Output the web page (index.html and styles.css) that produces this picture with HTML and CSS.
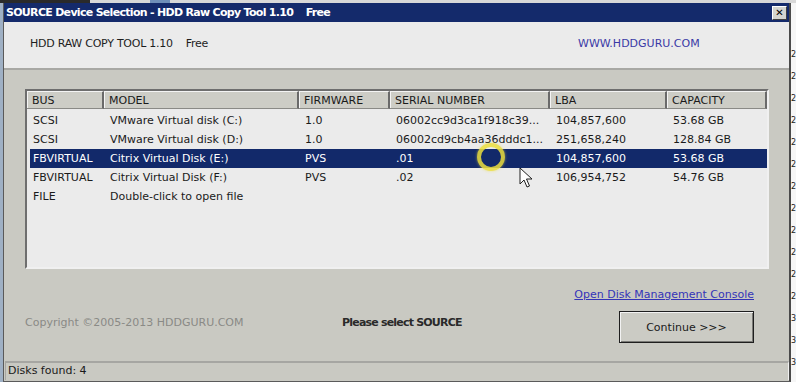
FILE: index.html
```html
<!DOCTYPE html>
<html lang="en">

<head>
    <meta charset="UTF-8">
    <title>SOURCE Device Selection - HDD Raw Copy Tool 1.10</title>
    <link rel="stylesheet" href="styles.css">
</head>

<body>
    <div class="screen">
        <div class="desk-left"></div>

        <div class="window">
            <div class="titlebar">
                <span class="title">SOURCE Device Selection - HDD Raw Copy Tool 1.10&nbsp;&nbsp;&nbsp; Free</span>
                <button class="close">&#x2715;</button>
            </div>

            <div class="banner">
                <span class="product">HDD RAW COPY TOOL 1.10&nbsp;&nbsp;&nbsp; Free</span>
                <span class="site">WWW.HDDGURU.COM</span>
            </div>

            <div class="content">
                <div class="list">
                    <table class="devices">
                        <colgroup>
                            <col class="c-bus">
                            <col class="c-model">
                            <col class="c-fw">
                            <col class="c-serial">
                            <col class="c-lba">
                            <col class="c-cap">
                        </colgroup>
                        <thead>
                            <tr>
                                <th>BUS</th>
                                <th>MODEL</th>
                                <th>FIRMWARE</th>
                                <th>SERIAL NUMBER</th>
                                <th>LBA</th>
                                <th>CAPACITY</th>
                            </tr>
                        </thead>
                        <tbody>
                            <tr>
                                <td>SCSI</td>
                                <td>VMware Virtual disk (C:)</td>
                                <td>1.0</td>
                                <td>06002cc9d3ca1f918c39...</td>
                                <td>104,857,600</td>
                                <td>53.68 GB</td>
                            </tr>
                            <tr>
                                <td>SCSI</td>
                                <td>VMware Virtual disk (D:)</td>
                                <td>1.0</td>
                                <td>06002cd9cb4aa36dddc1...</td>
                                <td>251,658,240</td>
                                <td>128.84 GB</td>
                            </tr>
                            <tr class="selected">
                                <td>FBVIRTUAL</td>
                                <td>Citrix Virtual Disk (E:)</td>
                                <td>PVS</td>
                                <td>.01</td>
                                <td>104,857,600</td>
                                <td>53.68 GB</td>
                            </tr>
                            <tr>
                                <td>FBVIRTUAL</td>
                                <td>Citrix Virtual Disk (F:)</td>
                                <td>PVS</td>
                                <td>.02</td>
                                <td>106,954,752</td>
                                <td>54.76 GB</td>
                            </tr>
                            <tr>
                                <td>FILE</td>
                                <td>Double-click to open file</td>
                                <td></td>
                                <td></td>
                                <td></td>
                                <td></td>
                            </tr>
                        </tbody>
                    </table>
                </div>

                <div class="footer">
                    <div class="copyright">Copyright &copy;2005-2013 HDDGURU.COM</div>
                    <div class="prompt">Please select SOURCE</div>
                    <div class="actions">
                        <a class="console-link" href="#">Open Disk Management Console</a>
                        <button class="continue">Continue &gt;&gt;&gt;</button>
                    </div>
                </div>
            </div>

            <div class="statusbar">
                <div class="status-field">Disks found: 4</div>
            </div>
        </div>

        <div class="desk-right">
            <span>2</span><span>2</span><span>2</span><span>2</span><span>2</span><span>2</span><span>2</span><span>2</span><span>2</span><span>2</span><span>2</span><span>2</span><span>3</span><span>3</span><span>3</span>
        </div>

        <!-- screen-recorder click marker and mouse pointer -->
        <div class="click-ring"></div>
        <svg class="pointer" width="14" height="22" viewBox="0 0 14 22">
            <path d="M1 1 L1 17 L5 13 L8 20 L10.5 19 L7.5 12 L13 12 Z" fill="#ffffff" stroke="#202020" stroke-width="1" stroke-linejoin="round" />
        </svg>
    </div>
</body>

</html>
```

FILE: styles.css
```css
* {
    box-sizing: border-box;
    margin: 0;
    padding: 0;
}

body {
    background: #f2f2f2;
    font-family: "DejaVu Sans", Verdana, sans-serif;
    font-size: 11px;
    color: #1a1a1a;
    overflow: hidden;
}

.screen {
    position: relative;
    width: 796px;
    height: 382px;
    display: flex;
    padding-top: 3px;
    background: linear-gradient(to right, #2a2a2a 0 90px, #d8d8d8 90px 150px, #6f8fb8 150px 170px, #d8d8d8 170px);
    background-size: 100% 3px;
    background-repeat: no-repeat;
    background-color: #f4f4f4;
}

.desk-left {
    width: 3px;
    background: #9fb0c4;
}

.window {
    width: 788px;
    display: flex;
    flex-direction: column;
    border-left: 1px solid #5a5a5a;
    border-right: 2px solid #4a4a4a;
    border-bottom: 1px solid #5a5a5a;
    background: #c9c9c2;
}

.titlebar {
    height: 19px;
    background: #142a6b;
    color: #ffffff;
    display: flex;
    align-items: center;
    justify-content: space-between;
    padding: 0 2px 0 2px;
}

.title {
    font-weight: bold;
    font-size: 11px;
    letter-spacing: -0.7px;
}

.close {
    width: 15px;
    height: 14px;
    background: #d4d4ce;
    border: 1px solid;
    border-color: #ffffff #404040 #404040 #ffffff;
    color: #000000;
    font-size: 10px;
    font-weight: bold;
    line-height: 11px;
    font-family: "DejaVu Sans", sans-serif;
}

.banner {
    height: 48px;
    background: #ebebeb;
    display: flex;
    align-items: center;
    padding: 0 0 4px 26px;
    border-bottom: 2px solid #a8a8a4;
}

.product {
    width: 548px;
    color: #1e1e1e;
    letter-spacing: -0.25px;
}

.site {
    color: #3a3aa6;
}

.content {
    flex: 1;
    padding: 19px 0 0 21px;
    display: flex;
    flex-direction: column;
}

.list {
    width: 744px;
    height: 180px;
    background: #ebebeb;
    border: 2px solid;
    border-color: #6e6e6e #f0f0f0 #f0f0f0 #6e6e6e;
    overflow: hidden;
}

.devices {
    width: 740px;
    table-layout: fixed;
    border-collapse: separate;
    border-spacing: 0;
}

.c-bus { width: 77px; }
.c-model { width: 195px; }
.c-fw { width: 91px; }
.c-serial { width: 160px; }
.c-lba { width: 117px; }
.c-cap { width: 100px; }

.devices th {
    height: 18px;
    background: #cdcdc6;
    font-weight: normal;
    text-align: left;
    padding: 0 0 0 5px;
    border-right: 2px solid #6a6a6a;
    border-bottom: 1px solid #8a8a86;
    border-top: 1px solid #f4f4f4;
    box-shadow: inset 1px 0 0 #f4f4f4;
    white-space: nowrap;
    overflow: hidden;
}

.devices td {
    height: 19px;
    padding: 0 0 0 6px;
    white-space: nowrap;
    overflow: hidden;
}

.devices tbody tr:first-child td {
    padding-top: 2px;
    height: 21px;
}

.devices .selected td {
    background: #12296a;
    color: #ffffff;
}

.devices .selected td:first-child {
    box-shadow: inset 3px 0 0 #ebebeb;
}

.footer {
    height: 91px;
    display: grid;
    grid-template-columns: 317px 1fr auto;
    align-items: end;
    padding: 0 35px 17px 0;
}

.copyright {
    color: #8a8a86;
    font-size: 11px;
    line-height: 13px;
    margin-bottom: 14px;
}

.prompt {
    color: #2a2a2a;
    font-weight: bold;
    font-size: 11px;
    line-height: 13px;
    letter-spacing: -0.8px;
    margin-bottom: 14px;
}

.actions {
    display: flex;
    flex-direction: column;
    align-items: flex-end;
    gap: 10px;
}

.console-link {
    color: #3434b8;
    text-decoration: underline;
    line-height: 13px;
}

.continue {
    width: 135px;
    height: 32px;
    background: #cbcbc4;
    border: 1px solid #1e1e1e;
    box-shadow: inset 1px 1px 0 #f2f2f2, inset -1px -1px 0 #7a7a76;
    font-family: "DejaVu Sans", sans-serif;
    font-size: 11px;
    color: #1a1a1a;
}

.statusbar {
    height: 21px;
    padding: 1px 0 1px 1px;
}

.status-field {
    height: 19px;
    border-top: 2px solid #a6a6a2;
    border-left: 1px solid #a6a6a2;
    border-right: 1px solid #f0f0f0;
    padding: 1px 0 0 2px;
    font-size: 11px;
}

.desk-right {
    flex: 1;
    background: #f6f6f6;
    display: flex;
    flex-direction: column;
    padding-top: 46px;
    gap: 11px;
    font-size: 8px;
    line-height: 11px;
    color: #202020;
    overflow: hidden;
}

.click-ring {
    position: absolute;
    left: 477px;
    top: 143px;
    width: 28px;
    height: 28px;
    border-radius: 50%;
    border: 4px solid rgba(236, 222, 60, 0.85);
    box-shadow: 0 0 3px rgba(236, 222, 60, 0.6);
}

.pointer {
    position: absolute;
    left: 519px;
    top: 167px;
}
```
